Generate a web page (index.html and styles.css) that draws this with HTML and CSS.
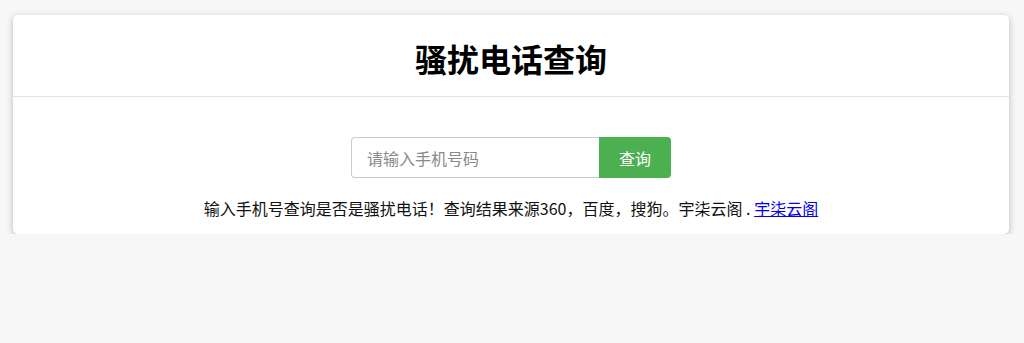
FILE: index.html
```html
<!DOCTYPE html>
<html lang="zh-CN">
<head>
<meta charset="utf-8">
<title>骚扰电话查询</title>
<link rel="stylesheet" href="styles.css">
</head>
<body>
<div class="page">
  <div class="card">
    <div class="card-header">
      <h1 class="title">骚扰电话查询</h1>
    </div>
    <div class="card-body">
      <form class="search" onsubmit="return false;">
        <input class="search-input" type="text" placeholder="请输入手机号码">
        <button class="search-btn" type="submit">查询</button>
      </form>
      <p class="note">输入手机号查询是否是骚扰电话！查询结果来源360，百度，搜狗。宇柒云阁 . <a href="#" class="note-link">宇柒云阁</a></p>
    </div>
  </div>
</div>
</body>
</html>
```
FILE: styles.css
```css
html, body {
  margin: 0;
  padding: 0;
  background: #f7f7f7;
  font-family: "Noto Sans CJK SC", "Noto Sans", sans-serif;
}
.page {
  padding: 15px 15px 0 13px;
}
.card {
  background: #fff;
  border-radius: 5px;
  box-shadow: 0 2px 7px rgba(0, 0, 0, 0.25);
  overflow: hidden;
}
.card-header {
  height: 81px;
  display: flex;
  align-items: center;
  justify-content: center;
  border-bottom: 1px solid #e3e3e3;
}
.title {
  margin: 0;
  font-size: 32px;
  font-weight: 700;
  color: #000;
  line-height: 1;
  padding-top: 4px;
}
.card-body {
  padding: 40px 0 14px;
  text-align: center;
}
.search {
  display: flex;
  justify-content: center;
  margin: 0;
}
.search-input {
  box-sizing: border-box;
  width: 248px;
  height: 41px;
  padding: 0 15px;
  border: 1px solid #ccc;
  border-right: none;
  border-radius: 4px 0 0 4px;
  font-family: inherit;
  font-size: 16px;
  color: #333;
  outline: none;
}
.search-input::placeholder {
  color: #8a8a8a;
}
.search-btn {
  box-sizing: border-box;
  width: 72px;
  height: 41px;
  border: none;
  border-radius: 0 4px 4px 0;
  background: #4caf50;
  color: #fff;
  font-family: inherit;
  font-size: 16px;
  cursor: pointer;
}
.note {
  margin: 18px 0 0;
  font-size: 16px;
  line-height: 24px;
  color: #111;
}
.note-link {
  color: #0000ee;
  text-decoration: underline;
}
```
